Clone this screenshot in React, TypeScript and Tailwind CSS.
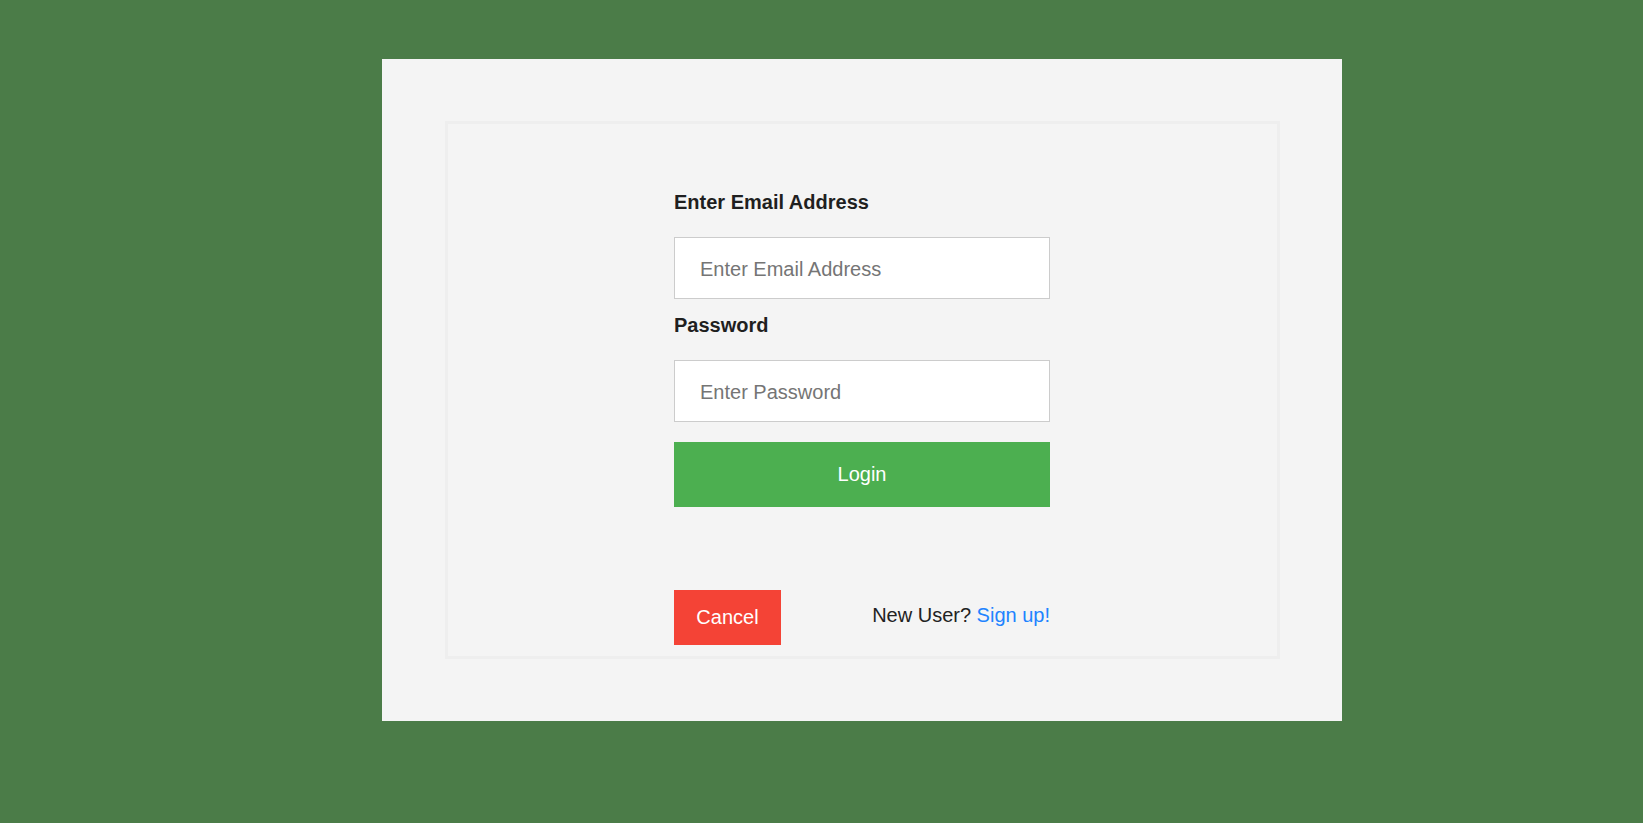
import React from "react";

export default function App() {
  return (
    <div className="min-h-[823px] w-full bg-[#4b7c48] pt-[59px] pb-[102px] font-['Liberation_Sans',Arial,sans-serif]">
      <div className="ml-[382px] w-[960px] bg-[#f4f4f4] pt-[62px] pb-[62px] pl-[63px] pr-[62px]">
        <div className="border-[3px] border-[#eeeeee] h-[538px] pt-[67px]">
          <div className="ml-[226px] w-[376px] flex flex-col">
            <label className="block text-[20px] leading-[23px] font-bold text-[#1f1f1f]">Enter Email Address</label>
            <input
              type="text"
              placeholder="Enter Email Address"
              className="mt-[23px] h-[62px] w-full border border-[#cccccc] bg-white pl-[25px] pt-[2px] text-[20px] text-[#222] placeholder:text-[#757575] outline-none"
            />
            <label className="mt-[15px] block text-[20px] leading-[23px] font-bold text-[#1f1f1f]">Password</label>
            <input
              type="password"
              placeholder="Enter Password"
              className="mt-[23px] h-[62px] w-full border border-[#cccccc] bg-white pl-[25px] pt-[2px] text-[20px] text-[#222] placeholder:text-[#757575] outline-none"
            />
            <button className="mt-[20px] h-[65px] w-full bg-[#4caf50] text-white text-[20px] leading-[23px]">Login</button>
            <div className="mt-[83px] flex justify-between items-start">
              <button className="h-[55px] w-[107px] bg-[#f44336] text-white text-[20px] leading-[23px]">Cancel</button>
              <span className="mt-[14px] text-[20px] leading-[23px] text-[#222]">
                New User? <a href="#" className="text-[#2183ff]">Sign up!</a>
              </span>
            </div>
          </div>
        </div>
      </div>
    </div>
  );
}
